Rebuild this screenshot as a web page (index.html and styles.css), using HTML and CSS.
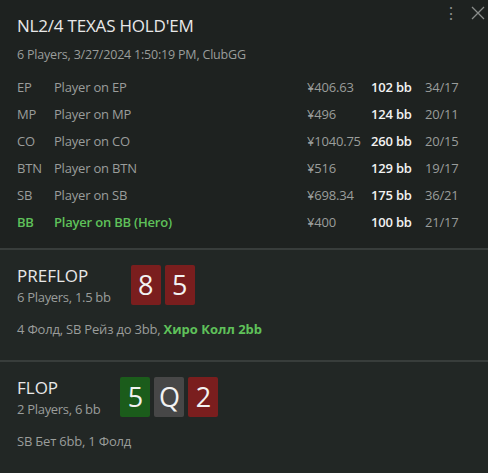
FILE: index.html
```html
<!DOCTYPE html>
<html lang="en">
<head>
  <meta charset="UTF-8" />
  <title>Hand History</title>
  <link rel="stylesheet" href="styles.css">
</head>
<body>
  <div class="panel">
    <div class="header">
      <div class="toolbar">
        <span class="dots">⋮</span>
        <svg class="close" width="14" height="14" viewBox="0 0 14 14"><path d="M1 1L13 13M13 1L1 13" stroke="#8a8d8b" stroke-width="1.3" fill="none"/></svg>
      </div>
      <div class="title">NL2/4 TEXAS HOLD'EM</div>
      <div class="sub">6 Players, 3/27/2024 1:50:19 PM, ClubGG</div>

      <div class="players">
        <div class="row"><span class="pos">EP</span><span class="name">Player on EP</span><span class="money">¥406.63</span><span class="bb">102 bb</span><span class="ratio">34/17</span></div>
        <div class="row"><span class="pos">MP</span><span class="name">Player on MP</span><span class="money">¥496</span><span class="bb">124 bb</span><span class="ratio">20/11</span></div>
        <div class="row"><span class="pos">CO</span><span class="name">Player on CO</span><span class="money">¥1040.75</span><span class="bb">260 bb</span><span class="ratio">20/15</span></div>
        <div class="row"><span class="pos">BTN</span><span class="name">Player on BTN</span><span class="money">¥516</span><span class="bb">129 bb</span><span class="ratio">19/17</span></div>
        <div class="row"><span class="pos">SB</span><span class="name">Player on SB</span><span class="money">¥698.34</span><span class="bb">175 bb</span><span class="ratio">36/21</span></div>
        <div class="row hero"><span class="pos">BB</span><span class="name">Player on BB (Hero)</span><span class="money">¥400</span><span class="bb">100 bb</span><span class="ratio">21/17</span></div>
      </div>
    </div>

    <div class="street">
      <div class="street-top">
        <div>
          <div class="street-name">PREFLOP</div>
          <div class="street-sub">6 Players, 1.5 bb</div>
        </div>
        <div class="cards">
          <div class="card red">8</div>
          <div class="card red">5</div>
        </div>
      </div>
      <div class="actions">4 Фолд, SB Рейз до 3bb, <span class="hero-act">Хиро Колл 2bb</span></div>
    </div>

    <div class="street last">
      <div class="street-top">
        <div>
          <div class="street-name">FLOP</div>
          <div class="street-sub">2 Players, 6 bb</div>
        </div>
        <div class="cards">
          <div class="card green">5</div>
          <div class="card grey">Q</div>
          <div class="card red">2</div>
        </div>
      </div>
      <div class="actions">SB Бет 6bb, 1 Фолд</div>
    </div>
  </div>
</body>
</html>
```

FILE: styles.css
```css
body {
  margin: 0;
  background-color: #1f2321;
  font-family: "Open Sans", "Noto Sans", sans-serif;
  color: #e6e6e6;
}

.panel {
  width: 488px;
  height: 473px;
  overflow: hidden;
  background-color: #222725;
}

.header {
  position: relative;
  background-color: #1e2220;
  padding: 15px 17px 12px;
  border-bottom: 2px solid #383d3b;
}

.toolbar {
  position: absolute;
  top: 4px;
  right: 3px;
  display: flex;
  align-items: center;
  gap: 12px;
}

.dots {
  color: #8a8d8b;
  font-size: 16px;
  line-height: 18px;
}

.title {
  font-size: 17px;
  line-height: 22px;
  color: #e8e8e8;
  letter-spacing: -0.2px;
}

.sub {
  font-size: 12.5px;
  line-height: 18px;
  margin-top: 9px;
  color: #9a9d9b;
  letter-spacing: -0.2px;
}

.players {
  margin-top: 10px;
}

.row {
  display: flex;
  font-size: 13px;
  line-height: 27px;
  color: #9a9d9b;
  letter-spacing: -0.2px;
}

.pos {
  width: 37px;
}

.name {
  width: 253px;
}

.money {
  width: 64px;
}

.bb {
  width: 54px;
  color: #f2f2f2;
  font-weight: 600;
}

.row.hero .pos,
.row.hero .name {
  color: #5fc15a;
  font-weight: 600;
}

.street {
  padding: 15px 17px 22px;
  border-bottom: 2px solid #383d3b;
}

.street.last {
  border-bottom: none;
}

.street-top {
  display: flex;
  gap: 20px;
}

.street-name {
  font-size: 17px;
  line-height: 22px;
  color: #e8e8e8;
}

.street-sub {
  font-size: 13px;
  line-height: 21px;
  color: #9a9d9b;
  letter-spacing: -0.3px;
}

.cards {
  display: flex;
  gap: 4px;
}

.card {
  width: 30px;
  height: 40px;
  border-radius: 2px;
  color: #f2f2f2;
  font-size: 27px;
  line-height: 40px;
  text-align: center;
}

.card.red {
  background-color: #7a1e1e;
}

.card.green {
  background-color: #1b5c1b;
}

.card.grey {
  background-color: #474747;
}

.actions {
  margin-top: 12px;
  font-size: 13px;
  line-height: 18px;
  color: #9a9d9b;
  letter-spacing: -0.2px;
}

.hero-act {
  color: #5fc15a;
  font-weight: 700;
  letter-spacing: 0;
}
```
